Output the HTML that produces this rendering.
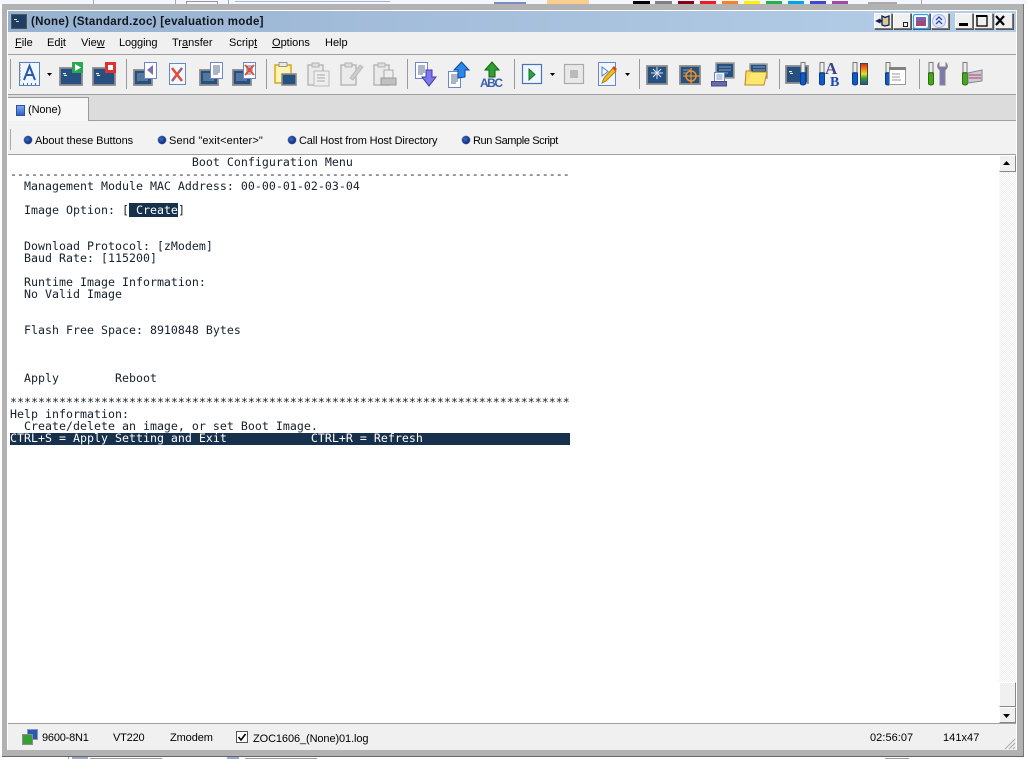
<!DOCTYPE html>
<html><head><meta charset="utf-8"><title>ZOC</title>
<style>
html,body{margin:0;padding:0;width:1027px;height:759px;overflow:hidden;background:#fff}
div,span,svg{position:absolute}
.ui{font:11px/14px "Liberation Sans",sans-serif;color:#000;white-space:pre}
.t{font:11.6px/12px "DejaVu Sans Mono",monospace;letter-spacing:.017px;color:#14202c;white-space:pre;left:10px;height:12px}
.tb{top:13px;width:16px;height:14px;background:#f0f0f0;border:1px solid;border-color:#fff #777 #777 #fff;box-shadow:1px 1px 0 #555}
u{text-decoration:underline}
.sw{top:1px;height:3px}
.bul{top:136px;width:8px;height:8px;border-radius:50%;background:radial-gradient(circle at 40% 40%,#3a6cc8,#0c2a78 70%);box-shadow:0 0 0 .5px #8a9ab0}
</style></head><body>
<!-- background slivers -->
<div style="left:0;top:0;width:1027px;height:4px;background:#f3f7fd"></div>
<div style="left:93px;top:0;width:1px;height:4px;background:#9aa8c0"></div>
<div style="left:175px;top:0;width:1px;height:4px;background:#9aa8c0"></div>
<div style="left:186px;top:1px;width:32px;height:3px;border:1px solid #999;border-bottom:0;box-sizing:border-box"></div>
<div style="left:228px;top:0;width:1px;height:4px;background:#9aa8c0"></div>
<div style="left:235px;top:1px;width:155px;height:3px;border-top:1px solid #a8b4d0"></div>
<div style="left:494px;top:2px;width:32px;height:2px;background:#7a8cc0"></div>
<div style="left:547px;top:0;width:42px;height:4px;background:#f8cf8c"></div>
<div class="sw" style="left:633px;width:17px;background:#000"></div>
<div class="sw" style="left:655px;width:17px;background:#7f7f7f"></div>
<div class="sw" style="left:678px;width:16px;background:#880015"></div>
<div class="sw" style="left:700px;width:16px;background:#ed1c24"></div>
<div class="sw" style="left:722px;width:16px;background:#ff7f27"></div>
<div class="sw" style="left:744px;width:16px;background:#fff200"></div>
<div class="sw" style="left:766px;width:16px;background:#22b14c"></div>
<div class="sw" style="left:788px;width:16px;background:#00a2e8"></div>
<div class="sw" style="left:810px;width:16px;background:#3f48cc"></div>
<div class="sw" style="left:832px;width:16px;background:#a349a4"></div>
<div style="left:868px;top:2px;width:29px;height:2px;background:#aaa"></div>
<div style="left:921px;top:0;width:1px;height:4px;background:#9aa8c0"></div>
<!-- window frame -->
<div style="left:2px;top:4px;width:1021px;height:752px;background:#b2b2b2;border-right:1px solid #777;border-bottom:1px solid #666;box-sizing:content-box"></div>
<div style="left:7px;top:10px;width:1010px;height:740px;background:#fff"></div>
<!-- title bar -->
<div style="left:8px;top:11px;width:1008px;height:21px;background:linear-gradient(90deg,#97b2d1,#b5cee8)"></div>
<svg style="left:11px;top:14px" width="16" height="15"><rect x=".5" y=".5" width="15" height="14" fill="#1f3f62" stroke="#555"/><rect x="3" y="5" width="3" height="1" fill="#fff"/><rect x="5" y="7" width="3" height="1" fill="#cde"/></svg>
<div class="ui" style="left:31px;top:15px;font-weight:bold;font-size:11.5px;letter-spacing:.3px;color:#10151c">(None) (Standard.zoc) [evaluation mode]</div>
<!-- title buttons -->
<div class="tb" style="left:874px"></div><div class="tb" style="left:893px"></div><div class="tb" style="left:912px"></div><div class="tb" style="left:931px"></div>
<div class="tb" style="left:955px"></div><div class="tb" style="left:974px;width:17px"></div><div class="tb" style="left:995px"></div>
<svg style="left:874px;top:13px" width="140" height="17" fill="none">
<path d="M2 8l4-2v1h2v2H6v1z" fill="#102060" stroke="#102060" stroke-width=".8"/><path d="M8 3l3 1.500 4-1.500v9l-4 1-3-1z" fill="#d8cc88" stroke="#102060" stroke-width="1.300"/>
<rect x="29.500" y="9.500" width="4" height="4" stroke="#222"/>
<rect x="39.500" y="1.500" width="15" height="14" rx="2" fill="#fff" stroke="#2aa0f0" stroke-width="1.300"/><rect x="42" y="4" width="10" height="9" fill="#a04878"/><rect x="42" y="4" width="10" height="4" fill="#7a60b0"/>
<circle cx="65" cy="8" r="6.500" fill="#dfe6fa" stroke="#a8b8e8"/><path d="M62 7l3-3 3 3M62 11l3-3 3 3" stroke="#1a3a90" stroke-width="1.200"/>
<rect x="85" y="10" width="9" height="3" fill="#000"/>
<rect x="103" y="3" width="10" height="10" stroke="#000" stroke-width="1.300"/><rect x="102" y="2" width="11" height="2" fill="#000"/>
<path d="M122 3l8 9M130 3l-8 9" stroke="#000" stroke-width="2.200"/>
</svg>
<!-- menu -->
<div style="left:8px;top:32px;width:1008px;height:22px;background:#f0f0f0"></div>
<div class="ui" style="left:15px;top:36px"><u>F</u>ile</div>
<div class="ui" style="left:47px;top:36px">Ed<u>i</u>t</div>
<div class="ui" style="left:81px;top:36px">Vie<u>w</u></div>
<div class="ui" style="left:119px;top:36px;letter-spacing:-.1px">Logging</div>
<div class="ui" style="left:172px;top:36px">Tr<u>a</u>nsfer</div>
<div class="ui" style="left:229px;top:36px">Scrip<u>t</u></div>
<div class="ui" style="left:272px;top:36px"><u>O</u>ptions</div>
<div class="ui" style="left:325px;top:36px">Help</div>
<div style="left:8px;top:54px;width:1008px;height:1px;background:#a0a0a0"></div>
<!-- toolbar -->
<div style="left:8px;top:55px;width:1008px;height:39px;background:#f0f0f0"></div>
<div style="left:8px;top:94px;width:1008px;height:1px;background:#a0a0a0"></div>
<svg style="left:0;top:0" width="1027" height="100" fill="none">
<defs>
<g id="term"><rect x="1" y="1" width="22" height="17" fill="#265080" stroke="#8c8c8c" stroke-width="1.800"/><rect x="4" y="6" width="3" height="1.200" fill="#e8eef6"/><rect x="5" y="8" width="3" height="1" fill="#e8eef6"/></g>
<g id="sterm"><rect x="1" y="1" width="18" height="15" fill="#265080" stroke="#8c8c8c" stroke-width="1.800"/><path d="M4 5h10M4 7h12M4 9h9M4 11h11" stroke="#7f9fc0"/></g>
<g id="doc"><rect x=".5" y=".5" width="12" height="16" fill="#fff" stroke="#6a88c8"/><path d="M3 4h7M3 6h7M3 8h7M3 10h7M3 12h5" stroke="#5a6a90"/></g>
<g id="gclip"><rect x="1" y="3" width="15" height="20" fill="#ebebeb" stroke="#b4b4b4" stroke-width="1.400"/><rect x="5" y="1" width="7" height="4" fill="#ddd" stroke="#b4b4b4"/></g>
<g id="tube"><rect x="2" y=".5" width="4" height="10" fill="#eee" stroke="#777"/><path d="M1.500 11h5v11q-2.500 2-5 0z" fill="#0f5cc0" stroke="#0a3a90"/></g>
<g id="gtube"><rect x="2" y=".5" width="4" height="10" fill="#eee" stroke="#777"/><path d="M1.500 11h5v11q-2.500 2-5 0z" fill="#48a818" stroke="#2a7010"/></g>
<path id="dd" d="M0 0h5l-2.500 3z" fill="#000"/>
</defs>
<g stroke="#9a9a9a"><path d="M10.500 59v30M126.500 59v30M266.500 59v30M407.500 59v30M514.500 59v30M639.500 59v30M779.500 59v30M919.500 59v30"/></g>
<!-- A -->
<rect x="19.500" y="62.500" width="20" height="23" fill="#eef6ff" stroke="#5b7cc0"/>
<path d="M19 65h2M19 68h2M19 71h2M19 74h2M19 77h2M19 80h2" stroke="#8a8a8a"/>
<path d="M24 80l5.500-14 5.500 14M26 75h7" stroke="#2858a8" stroke-width="2"/><path d="M23 84h1M27 84h1M31 84h1M35 84h1" stroke="#1a3a80" stroke-width="1.600"/>
<use href="#dd" x="47" y="73"/>
<!-- green / red terminal -->
<use href="#term" x="59" y="67"/><rect x="72" y="62" width="11" height="11" fill="#28a850"/><path d="M75 64v7l6-3.500z" fill="#fff"/>
<use href="#term" x="92" y="67"/><rect x="105" y="62" width="11" height="11" fill="#e03030"/><rect x="108" y="65" width="5" height="5" fill="#fff"/>
<!-- doc left -->
<use href="#sterm" x="133" y="69"/><rect x="144.500" y="62.500" width="12" height="16" fill="#fff" stroke="#6a88c8"/><path d="M147 70l6-5v10z" fill="#7a70b0"/>
<!-- X doc -->
<rect x="169.500" y="63.500" width="16" height="21" fill="#f4f8ff" stroke="#6a88c8"/><path d="M172 68l10 13M182 68l-10 13" stroke="#e05038" stroke-width="2.600"/><path d="M179 72l3-4M175 78l-3 3" stroke="#6a70b0" stroke-width="1.500"/>
<!-- term doc -->
<use href="#sterm" x="199" y="69"/><use href="#doc" x="210" y="62"/>
<use href="#sterm" x="232" y="69"/><use href="#doc" x="243" y="62"/><path d="M245 65l9 10M254 65l-9 10" stroke="#e05038" stroke-width="2"/>
<!-- clipboard yellow -->
<rect x="275" y="65" width="16" height="18" fill="#fff4b0" stroke="#d8a010" stroke-width="1.400"/><rect x="279" y="62.500" width="8" height="4" fill="#e8e8e8" stroke="#999"/><rect x="282" y="74" width="14" height="11" fill="#265080" stroke="#8c8c8c" stroke-width="1.600"/>
<!-- grey -->
<use href="#gclip" x="307" y="62"/><rect x="314" y="71" width="15" height="15" fill="#eee" stroke="#bbb"/><path d="M317 75h8M317 78h8M317 81h8" stroke="#aaa"/>
<use href="#gclip" x="340" y="62"/><path d="M350 78l10-13 3 2-10 13z" fill="#ccc" stroke="#bbb"/>
<use href="#gclip" x="373" y="62"/><rect x="384" y="70" width="9" height="9" fill="#eee" stroke="#aaa"/><rect x="381" y="78" width="15" height="7" fill="#c0c0c0" stroke="#999"/>
<!-- arrows -->
<use href="#doc" x="415" y="62"/><path d="M426 70h6v7h4l-7 9-7-9h4z" fill="#7c78f0" stroke="#403c98"/>
<use href="#doc" x="448" y="71"/><path d="M458 78V70h-4l7.500-8 7.500 8h-4v7z" fill="#2a88e8" stroke="#104898"/>
<path d="M489 77v-7h-4l7-8 7 8h-4v7z" fill="#30a030" stroke="#106010"/>
<text x="480" y="87" font-family="Liberation Sans" font-size="12" font-weight="bold" fill="#3a60b0" textLength="23">ABC</text>
<!-- play/stop -->
<rect x="522.500" y="64.500" width="19" height="19" fill="#f0f8ff" stroke="#4a70c0" stroke-width="1.200"/><path d="M529 69v11l6-5.500z" fill="#30a040" stroke="#207030"/>
<use href="#dd" x="550" y="73"/>
<rect x="564.500" y="64.500" width="19" height="19" fill="#e8e8e8" stroke="#aaa" stroke-width="1.200"/><rect x="570" y="70" width="8" height="8" fill="#bbb"/>
<rect x="598.500" y="62.500" width="17" height="23" fill="#eef6ff" stroke="#6a88c8"/><path d="M602 67v9l6-4.500z" fill="#fff" stroke="#5b7cc8"/><path d="M602 83l2-5 9-10 3 3-10 10z" fill="#f0c020" stroke="#b08010"/><path d="M612 68l2-2 3 3-2 2z" fill="#e04030"/>
<use href="#dd" x="625" y="73"/>
<!-- star -->
<rect x="647" y="66" width="20" height="18" fill="#265080" stroke="#8c8c8c" stroke-width="1.800"/><path d="M653 69l8 8M661 69l-8 8M657 67v12M651 73h12" stroke="#dde8f4" stroke-width="1"/>
<rect x="680" y="66" width="20" height="18" fill="#265080" stroke="#8c8c8c" stroke-width="1.800"/><path d="M683 70h7M683 73h5" stroke="#7f9fc0"/><circle cx="691" cy="76" r="5" stroke="#f09020" stroke-width="1.500"/><path d="M691 68v16M683 76h17" stroke="#f09020" stroke-width="1.300"/>
<rect x="716" y="63" width="18" height="15" fill="#265080" stroke="#a0a0a0" stroke-width="1.600"/><path d="M719 67h12M719 70h12M719 73h9" stroke="#7f9fc0"/>
<rect x="714.500" y="72.500" width="10" height="10" fill="#f4f8ff" stroke="#6a88c8"/><path d="M716.500 75h6M716.500 77h6M716.500 79h6" stroke="#8898b8"/><rect x="711.500" y="81.500" width="15" height="4.500" fill="#6a68a8" stroke="#484888"/>
<rect x="750" y="64" width="17" height="14" fill="#265080" stroke="#a0a0a0" stroke-width="1.600"/><path d="M753 67h12M753 70h12" stroke="#7f9fc0"/>
<path d="M748 72l-3 13h19l3-13z" fill="#fce870" stroke="#c08820"/><path d="M745 85l1-14h5l1 1" fill="#f8d860" stroke="#c08820"/>
<!-- tubes -->
<use href="#term" x="785" y="65"/><use href="#tube" x="799" y="62"/>
<use href="#tube" x="818" y="62"/><text x="825" y="74" font-family="Liberation Serif" font-size="17" font-weight="bold" fill="#3c4488">A</text><text x="830" y="86" font-family="Liberation Serif" font-size="14" font-weight="bold" fill="#1a48a8">B</text>
<use href="#tube" x="851" y="62"/>
<defs><linearGradient id="rb" x1="0" y1="0" x2="0" y2="1"><stop offset="0" stop-color="#e02018"/><stop offset=".3" stop-color="#f09010"/><stop offset=".5" stop-color="#e8e020"/><stop offset=".7" stop-color="#30a030"/><stop offset="1" stop-color="#2050b0"/></linearGradient></defs>
<rect x="860.500" y="63.500" width="7" height="21" fill="url(#rb)" stroke="#444"/>
<use href="#tube" x="884" y="62"/><rect x="889.500" y="67.500" width="16" height="17" fill="#fff" stroke="#999"/><rect x="889" y="67" width="17" height="3" fill="#808080"/><path d="M892 74h8M892 77h8M892 80h9" stroke="#999"/>
<use href="#gtube" x="927" y="62"/><path d="M939 63c-2 2-2 5 1 7v15h5V70c3-2 3-5 1-7v4h-7z" fill="#7a7ab0" stroke="#888"/>
<use href="#gtube" x="961" y="62"/><path d="M968 73l14-3v11l-14 2z" fill="#c8c8e0" stroke="#888"/><path d="M969 75h12M969 78h12" stroke="#c04050"/>
</svg>
<!-- tab strip -->
<div style="left:8px;top:95px;width:1008px;height:25px;background:#dcdcdc"></div>
<div style="left:8px;top:120px;width:1008px;height:1px;background:#a0a0a0"></div>
<div style="left:8px;top:97px;width:80px;height:24px;background:#f7f7f7;border-right:1px solid #9a9a9a;border-top:1px solid #9a9a9a"></div>
<div style="left:16px;top:105px;width:7px;height:9px;background:linear-gradient(#80a8e8,#3060c8);border:.5px solid #2850a8"></div>
<div class="ui" style="left:28px;top:103px;letter-spacing:-.1px">(None)</div>
<!-- button bar -->
<div style="left:8px;top:121px;width:1008px;height:33px;background:#f2f2f2"></div>
<div style="left:10px;top:129px;width:1px;height:21px;background:#a8a8a8"></div>
<div style="left:8px;top:154px;width:1008px;height:1px;background:#a0a0a0"></div>
<div class="bul" style="left:24px"></div><div class="ui" style="left:35px;top:134px;letter-spacing:-.05px">About these Buttons</div>
<div class="bul" style="left:158px"></div><div class="ui" style="left:169px;top:134px;letter-spacing:.13px">Send "exit&lt;enter&gt;"</div>
<div class="bul" style="left:288px"></div><div class="ui" style="left:299px;top:134px;letter-spacing:-.14px">Call Host from Host Directory</div>
<div class="bul" style="left:462px"></div><div class="ui" style="left:473px;top:134px;letter-spacing:-.4px">Run Sample Script</div>
<!-- terminal -->
<div style="left:8px;top:155px;width:991px;height:568px;background:#fff"></div>
<div class="t" style="top:156px">                          Boot Configuration Menu</div>
<div class="t" style="top:168px">--------------------------------------------------------------------------------</div>
<div class="t" style="top:180px">  Management Module MAC Address: 00-00-01-02-03-04</div>
<div class="t" style="top:204px">  Image Option: [<span style="position:static;background:#17304c;color:#fff"> Create</span>]</div>
<div class="t" style="top:240px">  Download Protocol: [zModem]</div>
<div class="t" style="top:252px">  Baud Rate: [115200]</div>
<div class="t" style="top:276px">  Runtime Image Information:</div>
<div class="t" style="top:288px">  No Valid Image</div>
<div class="t" style="top:324px">  Flash Free Space: 8910848 Bytes</div>
<div class="t" style="top:372px">  Apply        Reboot</div>
<div class="t" style="top:396px">********************************************************************************</div>
<div class="t" style="top:408px">Help information:</div>
<div class="t" style="top:420px">  Create/delete an image, or set Boot Image.</div>
<div style="left:10px;top:433px;width:560px;height:12px;background:#17304c"></div>
<div class="t" style="top:432px;color:#fff">CTRL+S = Apply Setting and Exit            CTRL+R = Refresh</div>
<!-- scrollbar -->
<div style="left:999px;top:155px;width:17px;height:568px;background:repeating-conic-gradient(#f0f0f0 0 25%,#fff 0 50%) 0 0/2px 2px"></div>
<div style="left:999px;top:155px;width:15px;height:15px;background:#f0f0f0;border:1px solid;border-color:#fff #888 #888 #fff"></div>
<div style="left:999px;top:682px;width:15px;height:23px;background:#f0f0f0;border:1px solid;border-color:#fff #888 #888 #fff"></div>
<div style="left:999px;top:707px;width:15px;height:14px;background:#f0f0f0;border:1px solid;border-color:#fff #888 #888 #fff"></div>
<svg style="left:999px;top:155px" width="17" height="568"><path d="M4 10h7l-3.500-4z" fill="#000"/><path d="M4 559h7l-3.500 4z" fill="#000"/></svg>
<!-- status bar -->
<div style="left:8px;top:723px;width:1008px;height:1px;background:#a0a0a0"></div>
<div style="left:8px;top:724px;width:1008px;height:26px;background:#f0f0f0"></div>
<svg style="left:22px;top:729px" width="16" height="16"><rect x="5.500" y=".5" width="10" height="10" fill="#2858b8" stroke="#8898b0"/><rect x=".5" y="5.500" width="10" height="10" fill="#38a030" stroke="#889088"/></svg>
<div class="ui" style="left:42px;top:731px;letter-spacing:-.2px">9600-8N1</div>
<div class="ui" style="left:113px;top:731px;letter-spacing:-.2px">VT220</div>
<div class="ui" style="left:170px;top:731px;letter-spacing:-.1px">Zmodem</div>
<svg style="left:236px;top:731px" width="12" height="12"><rect x=".5" y=".5" width="11" height="11" fill="#fff" stroke="#555"/><path d="M2.500 6l2.500 3 4.500-6" stroke="#000" stroke-width="1.600" fill="none"/></svg>
<div class="ui" style="left:253px;top:732px;letter-spacing:-.1px">ZOC1606_(None)01.log</div>
<div class="ui" style="left:870px;top:731px;letter-spacing:.05px">02:56:07</div>
<div class="ui" style="left:943px;top:731px;letter-spacing:.05px">141x47</div>
<svg style="left:1004px;top:737px" width="12" height="13"><path d="M1 12l10-10M5 12l6-6M9 12l2-2" stroke="#aaa" fill="none"/></svg>
<!-- bottom slivers -->
<div style="left:68px;top:757px;width:1px;height:2px;background:#999"></div>
<div style="left:72px;top:757px;width:16px;height:2px;background:#9aa8d0"></div>
<div style="left:90px;top:758px;width:72px;height:1px;background:#999"></div>
<div style="left:227px;top:757px;width:12px;height:2px;background:#9aa8d0"></div>
<div style="left:245px;top:758px;width:72px;height:1px;background:#999"></div>
<div style="left:885px;top:758px;width:24px;height:1px;background:#999"></div>
</body></html>
